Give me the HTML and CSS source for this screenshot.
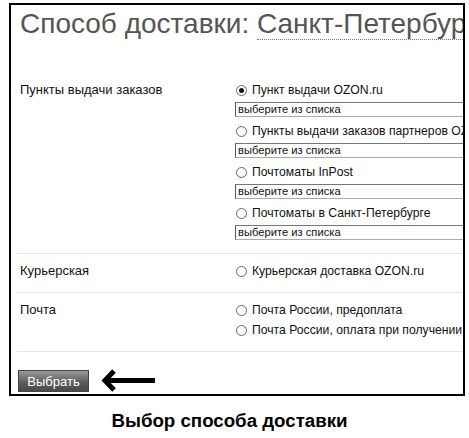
FILE: index.html
```html
<!DOCTYPE html>
<html lang="ru">
<head>
<meta charset="utf-8">
<title>Выбор способа доставки</title>
<link rel="stylesheet" href="styles.css">
</head>
<body>
<div class="frame">
  <h1 class="title">Способ доставки: <span class="city">Санкт-Петербург</span></h1>

  <div class="group first">
    <div class="label">Пункты выдачи заказов</div>
    <div class="options">
      <div class="opt"><span class="radio checked"></span>Пункт выдачи OZON.ru</div>
      <div class="select">выберите из списка</div>
      <div class="opt"><span class="radio"></span>Пункты выдачи заказов партнеров OZON.ru</div>
      <div class="select">выберите из списка</div>
      <div class="opt"><span class="radio"></span>Почтоматы InPost</div>
      <div class="select">выберите из списка</div>
      <div class="opt"><span class="radio"></span>Почтоматы в Санкт-Петербурге</div>
      <div class="select">выберите из списка</div>
    </div>
  </div>

  <div class="group">
    <div class="label">Курьерская</div>
    <div class="options">
      <div class="opt"><span class="radio"></span>Курьерская доставка OZON.ru</div>
    </div>
  </div>

  <div class="group">
    <div class="label">Почта</div>
    <div class="options">
      <div class="opt"><span class="radio"></span>Почта России, предоплата</div>
      <div class="opt"><span class="radio"></span>Почта России, оплата при получении</div>
    </div>
  </div>

  <div class="group actions">
    <button class="btn" type="button">Выбрать</button>
    <svg class="arrow" width="56" height="26" viewBox="0 0 56 26" aria-hidden="true">
      <path d="M13 3 L4 12.5 L13 22" fill="none" stroke="#000" stroke-width="5"/>
      <rect x="5" y="10" width="49" height="5" fill="#000"/>
    </svg>
  </div>
</div>
<div class="caption">Выбор способа доставки</div>
</body>
</html>
```

FILE: styles.css
```css
html, body {
  margin: 0;
  padding: 0;
  background: #fff;
}

body {
  font-family: "Liberation Sans", Arial, sans-serif;
  color: #000;
}

.frame {
  box-sizing: border-box;
  margin: 3px 0 0 9px;
  width: 456px;
  height: 393px;
  border: 2px solid #000;
  overflow: hidden;
  padding: 0 0 0 6px;
}

.title {
  margin: 3px 0 0 3px;
  font-size: 28px;
  line-height: 32px;
  font-weight: normal;
  color: #555;
  white-space: nowrap;
}

.city {
  border-bottom: 1px dotted #777;
}

.group {
  display: flex;
  border-top: 1px solid #e6e6e6;
  padding: 7px 0 11px 3px;
  margin-right: -20px;
}

.group.first {
  border-top: none;
  margin-top: 33px;
  padding-bottom: 9px;
}

.label {
  width: 215px;
  flex: none;
  font-size: 13px;
  line-height: 20px;
  color: #111;
}

.options {
  flex: 1;
  min-width: 0;
}

.opt {
  display: flex;
  align-items: center;
  height: 20px;
  font-size: 12.2px;
  color: #111;
  white-space: nowrap;
}

.radio {
  box-sizing: border-box;
  flex: none;
  width: 11px;
  height: 11px;
  margin: 0 5px 0 1px;
  border: 1px solid #666;
  border-radius: 50%;
  background: #fff;
  position: relative;
}

.radio.checked::after {
  content: "";
  position: absolute;
  left: 2px;
  top: 2px;
  width: 5px;
  height: 5px;
  border-radius: 50%;
  background: #111;
}

.select {
  box-sizing: border-box;
  height: 15px;
  margin: 2px 0 4px;
  padding-left: 2px;
  border: 1px solid #aaa;
  border-left-color: #555;
  border-top-color: #777;
  font-size: 11.2px;
  line-height: 13px;
  color: #111;
  white-space: nowrap;
}

.actions {
  align-items: center;
  padding: 16px 0 0 1px;
  gap: 12px;
}

.btn {
  box-sizing: border-box;
  width: 71px;
  height: 22px;
  padding: 0;
  border: 1px solid #444;
  background: linear-gradient(#9a9a9a, #5e5e5e 55%, #4a4a4a);
  color: #fff;
  font-family: "Liberation Sans", Arial, sans-serif;
  font-size: 13px;
  text-align: center;
}

.arrow {
  display: block;
  flex: none;
}

.caption {
  margin: 14px 10px 0 0;
  text-align: center;
  font-size: 18.7px;
  font-weight: bold;
  color: #000;
}
```
